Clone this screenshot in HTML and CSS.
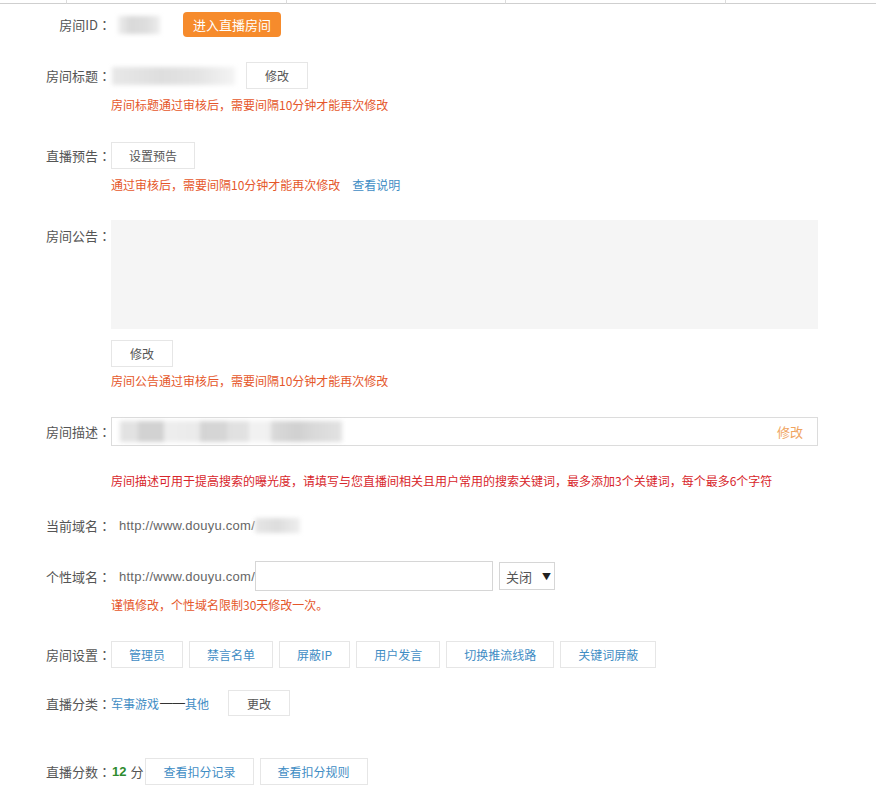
FILE: index.html
```html
<!DOCTYPE html>
<html lang="zh-CN">
<head>
<meta charset="utf-8">
<title>房间设置</title>
<link rel="stylesheet" href="styles.css">
</head>
<body>
<div class="tabs">
  <div class="tab"></div><div class="tab"></div><div class="tab"></div><div class="tab"></div><div class="tab last"></div>
</div>
<div class="page">
  <div class="row r1">
    <div class="line h25"><span class="label">房间ID<span class="colon" lang="zh-TW">：</span></span><span class="blur blur-id"></span><a class="btn-orange">进入直播房间</a></div>
  </div>

  <div class="row r2">
    <div class="line"><span class="label">房间标题<span class="colon" lang="zh-TW">：</span></span><span class="blur blur-title"></span><a class="btn btn-title">修改</a></div>
    <p class="note">房间标题通过审核后，需要间隔10分钟才能再次修改</p>
  </div>

  <div class="row r3">
    <div class="line"><span class="label">直播预告<span class="colon" lang="zh-TW">：</span></span><a class="btn">设置预告</a></div>
    <p class="note">通过审核后，需要间隔10分钟才能再次修改<a class="link explain">查看说明</a></p>
  </div>

  <div class="row r4">
    <div class="line top"><span class="label">房间公告<span class="colon" lang="zh-TW">：</span></span><div class="textarea"></div></div>
    <div class="indent"><a class="btn btn-notice">修改</a></div>
    <p class="note tight">房间公告通过审核后，需要间隔10分钟才能再次修改</p>
  </div>

  <div class="row r5">
    <div class="line h29"><span class="label">房间描述<span class="colon" lang="zh-TW">：</span></span>
      <div class="desc-input"><span class="blur blur-desc"></span><a class="desc-edit">修改</a></div>
    </div>
    <p class="note red">房间描述可用于提高搜索的曝光度，请填写与您直播间相关且用户常用的搜索关键词，最多添加3个关键词，每个最多6个字符</p>
  </div>

  <div class="row r6">
    <div class="line"><span class="label">当前域名<span class="colon" lang="zh-TW">：</span></span><span class="url">http://www.douyu.com/</span><span class="blur blur-domain"></span></div>
  </div>

  <div class="row r7">
    <div class="line h30"><span class="label">个性域名<span class="colon" lang="zh-TW">：</span></span><span class="url">http://www.douyu.com/</span><div class="domain-input"></div>
      <div class="select"><span>关闭</span><span class="arrow">▼</span></div>
    </div>
    <p class="note tight">谨慎修改，个性域名限制30天修改一次。</p>
  </div>

  <div class="row r8">
    <div class="line"><span class="label">房间设置<span class="colon" lang="zh-TW">：</span></span>
      <div class="btn-group">
        <a class="btn blue">管理员</a><a class="btn blue">禁言名单</a><a class="btn blue">屏蔽IP</a><a class="btn blue">用户发言</a><a class="btn blue">切换推流线路</a><a class="btn blue">关键词屏蔽</a>
      </div>
    </div>
  </div>

  <div class="row r9">
    <div class="line h26"><span class="label">直播分类<span class="colon" lang="zh-TW">：</span></span><span class="link">军事游戏</span><span class="dash">——</span><span class="link">其他</span><a class="btn btn-change">更改</a></div>
  </div>

  <div class="row r10">
    <div class="line"><span class="label">直播分数<span class="colon" lang="zh-TW">：</span></span><span class="score">12</span><span class="unit">分</span>
      <div class="btn-group"><a class="btn blue">查看扣分记录</a><a class="btn blue">查看扣分规则</a></div>
    </div>
  </div>
</div>
</body>
</html>
```

FILE: styles.css
```css
* { box-sizing: border-box; }
body {
  margin: 0;
  background: #fff;
  font-family: "Noto Sans CJK SC", "Microsoft YaHei", sans-serif;
  color: #555;
}
a { text-decoration: none; cursor: pointer; }

.tabs {
  display: grid;
  grid-template-columns: 67px 220px 219px 220px 1fr;
  height: 4px;
}
.tab {
  border-bottom: 1px solid #cfcfcf;
  border-right: 1px solid #dcdcdc;
}
.tab.last { border-right: none; }

.page { width: 818px; }

.row { display: block; }
.r1 { margin-top: 8px; }
.r2 { margin-top: 25px; }
.r3 { margin-top: 28px; }
.r4 { margin-top: 26px; }
.r5 { margin-top: 27px; }
.r6 { margin-top: 22px; }
.r7 { margin-top: 22px; }
.r8 { margin-top: 27px; }
.r9 { margin-top: 22px; }
.r10 { margin-top: 42px; }

.line {
  display: flex;
  align-items: center;
  height: 27px;
}
.line.h25 { height: 25px; }
.line.h26 { height: 26px; }
.line.h29 { height: 29px; }
.line.h30 { height: 30px; }
.line.top { align-items: flex-start; height: auto; }

.label {
  flex: 0 0 111px;
  width: 111px;
  text-align: right;
  font-size: 13px;
  color: #555;
  white-space: nowrap;
}
.colon { font-family: "Noto Sans CJK TC", "Noto Sans CJK JP", sans-serif; }
.line.top .label { padding-top: 5px; line-height: 22px; }

.note {
  margin: 7px 0 0 111px;
  font-size: 12px;
  line-height: 18px;
  color: #e5572b;
  white-space: nowrap;
}
.note.tight { margin-top: 5px; }
.note.red { margin-top: 26px; color: #d8262b; }

.indent { margin: 11px 0 0 111px; }

.btn {
  display: inline-flex;
  align-items: center;
  justify-content: center;
  height: 27px;
  padding: 0 17px;
  border: 1px solid #e6e6e6;
  background: #fff;
  font-size: 12px;
  color: #555;
  white-space: nowrap;
}
.btn.blue { color: #3f8dc4; }
.btn-title { margin-left: 11px; padding: 0 18px; }
.btn-notice { padding: 0 18px; }
.btn-change { margin-left: 19px; height: 26px; padding: 0 18px; }

.btn-orange {
  margin-left: 23px;
  display: inline-flex;
  align-items: center;
  height: 25px;
  padding: 0 10px;
  border-radius: 4px;
  background: #f68b2c;
  color: #fff;
  font-size: 13px;
}

.btn-group { display: flex; gap: 6px; }

.link { color: #3f8dc4; font-size: 12px; }
.explain { margin-left: 12px; }
.dash {
  color: #333;
  font-family: "Liberation Sans", sans-serif;
  font-size: 12.5px;
  padding: 0 0 0 1px;
}

.blur { display: inline-block; filter: blur(2px); }
.blur-id {
  margin-left: 7px;
  width: 42px;
  height: 18px;
  background: linear-gradient(90deg, #eee 0, #d9d9d9 30%, #dedede 70%, #eee 100%);
}
.blur-title {
  margin-left: 1px;
  width: 123px;
  height: 18px;
  background: linear-gradient(90deg, #e8e8e8 0, #dedede 40%, #e4e4e4 70%, #f4f4f4 100%);
}
.blur-domain {
  width: 45px;
  height: 15px;
  background: linear-gradient(90deg, #e6e6e6 0, #ddd 50%, #eee 100%);
}

.textarea {
  flex: 1;
  height: 109px;
  background: #f5f5f5;
}

.desc-input {
  flex: 1;
  height: 29px;
  border: 1px solid #dcdcdc;
  display: flex;
  align-items: center;
  justify-content: space-between;
  padding: 0 14px 0 8px;
}
.blur-desc {
  width: 222px;
  height: 21px;
  background: linear-gradient(90deg,
    #e2e2e2 0, #e2e2e2 8%, #d2d2d2 8%, #d2d2d2 20%, #eeeeee 20%, #eaeaea 36%,
    #d4d4d4 36%, #d6d6d6 48%, #e0e0e0 48%, #e2e2e2 58%, #f2f2f2 58%, #f0f0f0 68%,
    #dadada 68%, #d0d0d0 80%, #d8d8d8 86%, #e2e2e2 100%);
}
.desc-edit { color: #f0a45e; font-size: 13px; }

.url {
  margin-left: 8px;
  font-size: 13px;
  color: #666;
  font-family: "Liberation Sans", "Noto Sans CJK SC", sans-serif;
  letter-spacing: 0.25px;
}

.domain-input {
  width: 238px;
  height: 30px;
  border: 1px solid #d6d6d6;
}
.select {
  margin-left: 6px;
  width: 56px;
  height: 28px;
  border: 1px solid #d6d6d6;
  display: flex;
  align-items: center;
  padding-left: 6px;
  font-size: 13px;
  color: #555;
}
.select .arrow { margin-left: 10px; font-size: 9px; color: #222; }

.score {
  margin-left: 1px;
  font-family: "Liberation Sans", sans-serif;
  font-weight: bold;
  font-size: 13px;
  color: #2e8b2e;
}
.unit { margin: 0 2px 0 4px; font-size: 13px; color: #555; }
```
